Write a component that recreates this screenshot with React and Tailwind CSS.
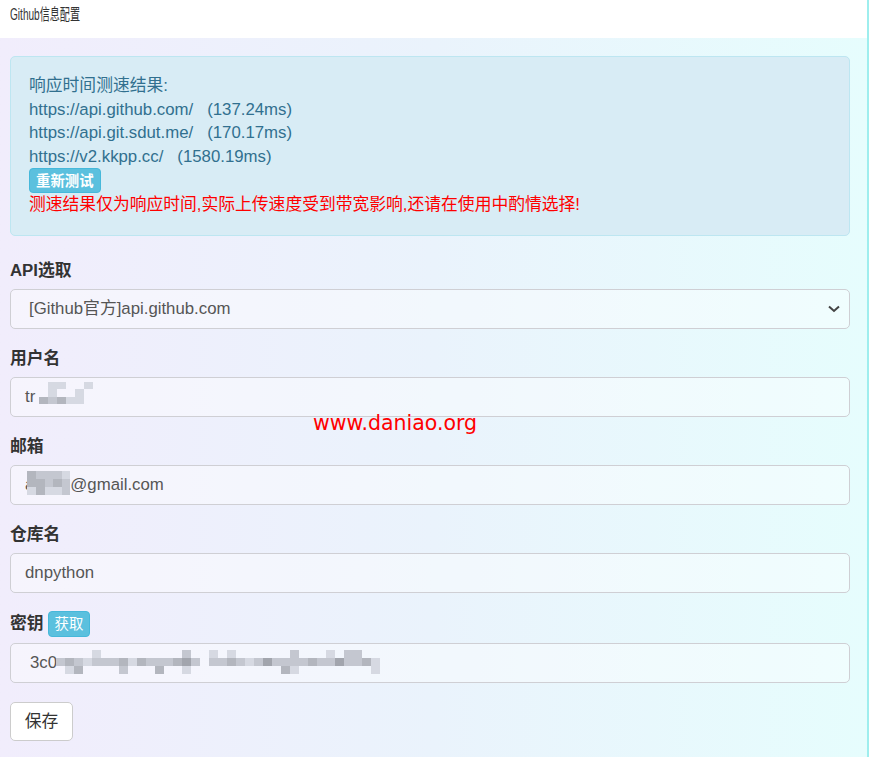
import React from "react";

const FONT = { fontFamily: '"Liberation Sans", Arial, "Noto Sans CJK SC", sans-serif' };

const C = {
  ".": "transparent",
  a: "#d6d9e2",
  b: "#c4c7d0",
  c: "#b3b6be",
  d: "#a2a5ad",
};

function Mosaic({ rows, cw, ch, className = "" }) {
  return (
    <span className={"inline-flex flex-col " + className}>
      {rows.map((r, i) => (
        <span key={i} className="flex">
          {r.split("").map((k, j) => (
            <span key={j} style={{ width: cw, height: ch, background: C[k] }} />
          ))}
        </span>
      ))}
    </span>
  );
}

function Label({ children }) {
  return (
    <div className="mt-[18px] mb-[6px] h-[24px] leading-[24px] text-[16.8px] font-bold text-[#333]">
      {children}
    </div>
  );
}

function Field({ children, className = "" }) {
  return (
    <div
      className={
        "h-[40px] rounded-[5px] border border-[#cfcfd4] bg-white/40 flex items-center text-[16.8px] text-[#555] " +
        className
      }
    >
      {children}
    </div>
  );
}

export default function App() {
  return (
    <div className="relative w-[869px] h-[757px] flex overflow-hidden" style={FONT}>
      <div className="flex-1 flex flex-col">
        <div className="h-[38px] bg-white px-[10px] pt-[4px]">
          <div className="origin-left scale-x-[0.63] text-[16px] leading-[22px] text-[#333] whitespace-nowrap">
            Github信息配置
          </div>
        </div>
        <div className="flex-1 bg-gradient-to-r from-[#f1edfc] via-[#eaf3fc] to-[#e6fdfd] pl-[10px] pr-[17px] pt-[18px]">
          <div className="rounded-[5px] border border-[#bde6f1] bg-[#d8ecf5] px-[18px] pt-[17px] pb-[18px] text-[16.8px] leading-[23.5px] text-[#31708f]">
            <div>响应时间测速结果:</div>
            <div className="whitespace-pre">https://api.github.com/   (137.24ms)</div>
            <div className="whitespace-pre">https://api.git.sdut.me/   (170.17ms)</div>
            <div className="whitespace-pre">https://v2.kkpp.cc/   (1580.19ms)</div>
            <div className="flex">
              <button className="h-[25px] px-[6px] rounded-[4px] border border-[#46b8da] bg-[#5bc0de] text-white text-[14.4px] font-bold leading-[22px]">
                重新测试
              </button>
            </div>
            <div className="text-[#ff0000]">
              测速结果仅为响应时间,实际上传速度受到带宽影响,还请在使用中酌情选择!
            </div>
          </div>

          <div className="mt-[23.5px] mb-[6px] h-[24px] leading-[24px] text-[16.8px] font-bold text-[#333]">
            API选取
          </div>
          <Field className="pl-[18px] pr-[8px] justify-between">
            <span>[Github官方]api.github.com</span>
            <svg width="14" height="10" viewBox="0 0 14 10">
              <path d="M2 2.5 L7 7 L12 2.5" fill="none" stroke="#444" strokeWidth="2" />
            </svg>
          </Field>

          <Label>用户名</Label>
          <Field className="pl-[14px]">
            <span>tr</span>
            <Mosaic
              className="ml-[4px] -mt-[8px]"
              cw={9}
              ch={7.5}
              rows={[".aa..a", ".a..a.", "cbcaa."]}
            />
          </Field>

          <Label>邮箱</Label>
          <Field className="pl-[14px]">
            <span>a</span>
            <Mosaic
              className="-ml-[7px] -mt-[4px]"
              cw={8.6}
              ch={7.7}
              rows={["cbbba", "ccbcb", "acaab"]}
            />
            <span>@gmail.com</span>
          </Field>

          <Label>仓库名</Label>
          <Field className="pl-[14px]">
            <span>dnpython</span>
          </Field>

          <div className="mt-[18px] mb-[6px] h-[26px] flex items-center gap-[4px] text-[16.8px] font-bold text-[#333]">
            <span>密钥</span>
            <span className="h-[26px] px-[6px] rounded-[4px] bg-[#5bc0de] border border-[#46b8da] text-white text-[14.4px] font-normal leading-[24px]">
              获取
            </span>
          </div>
          <Field className="pl-[14px]">
            <span className="ml-[5px]">3c0</span>
            <Mosaic
              className="-ml-[1px] -mt-[2px]"
              cw={9}
              ch={7.7}
              rows={[
                "....a.........b..a.a......b...a.bb..",
                "bcbabbbcacbbbcdb.bbcbabdbbbbcbbdbbca",
                ".ac....b...c..a..........ca........a",
              ]}
            />
          </Field>

          <button className="mt-[19px] h-[39px] w-[63px] rounded-[5px] border border-[#ccc] bg-white text-[16.8px] text-[#333]">
            保存
          </button>
        </div>
      </div>
      <div className="w-[2px] bg-[#9eeeee]" />

      <div
        className="absolute left-[313px] top-[409px] text-[20.5px] leading-[28px] text-[#ff0000]"
        style={{ fontFamily: '"DejaVu Sans", Verdana, sans-serif' }}
      >
        www.daniao.org
      </div>
    </div>
  );
}
